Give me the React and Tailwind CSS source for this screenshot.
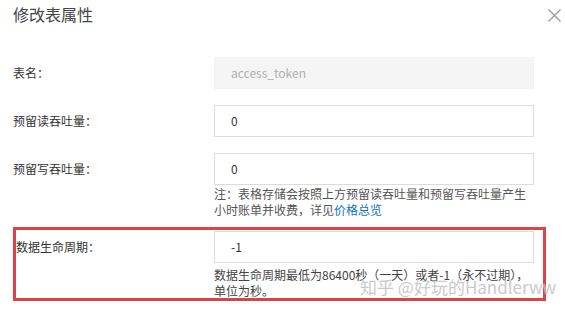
import React from "react";

const font = { fontFamily: '"Noto Sans CJK SC", "Noto Sans", sans-serif' };

function Row({ label, value, disabled, labelW = "w-[201px]" }) {
  return (
    <div className="flex items-center">
      <div className={`${labelW} shrink-0 text-[12px] text-[#333]`}>{label}</div>
      <div
        className={`w-[320px] h-[32px] flex items-center pl-[16px] text-[12px] border ${
          disabled ? "bg-[#f5f5f5] border-[#f2f2f2] text-[#b0b0b0]" : "bg-white border-[#dcdcdc] text-[#333]"
        }`}
      >
        {value}
      </div>
    </div>
  );
}

export default function App() {
  return (
    <div className="w-[565px] h-[311px] bg-white relative overflow-hidden" style={font}>
      <div className="flex justify-between items-start pl-[13px] pr-[3px] pt-[2px]">
        <div className="text-[16px] leading-6 text-[#444]">修改表属性</div>
        <svg width="15" height="15" viewBox="0 0 15 15" className="mt-[6px]">
          <path d="M1.5 1.5 L13.5 13.5 M13.5 1.5 L1.5 13.5" stroke="#999" strokeWidth="1.3" fill="none" />
        </svg>
      </div>
      <div className="pl-[13px] mt-[31px] flex flex-col">
        <Row label="表名：" value="access_token" disabled />
        <div className="mt-[16px]">
          <Row label="预留读吞吐量：" value="0" />
        </div>
        <div className="mt-[16px]">
          <Row label="预留写吞吐量：" value="0" />
        </div>
        <div className="ml-[201px] mt-[1px] w-[330px] text-[12px] leading-[16px] text-[#555]">
          注：表格存储会按照上方预留读吞吐量和预留写吞吐量产生
          <br />
          小时账单并收费，详见<span className="text-[#0a74c8]">价格总览</span>
        </div>
        <div className="mt-[9px] w-[533px] h-[74px] border-[3px] border-[#d9444a] pt-[1px]">
          <Row label="数据生命周期：" value="-1" labelW="w-[198px]" />
          <div className="ml-[198px] mt-[4px] text-[12px] leading-[16px] text-[#444]">
            数据生命周期最低为86400秒（一天）或者-1（永不过期），
            <br />
            单位为秒。
          </div>
        </div>
      </div>
      <div
        className="absolute left-[360px] top-[275px] text-[17px] leading-6 text-[#bdbdbd] opacity-80 whitespace-nowrap"
        style={{ textShadow: "0 0 1px #fff" }}
      >
        知乎 @好玩的Handlerww
      </div>
    </div>
  );
}
